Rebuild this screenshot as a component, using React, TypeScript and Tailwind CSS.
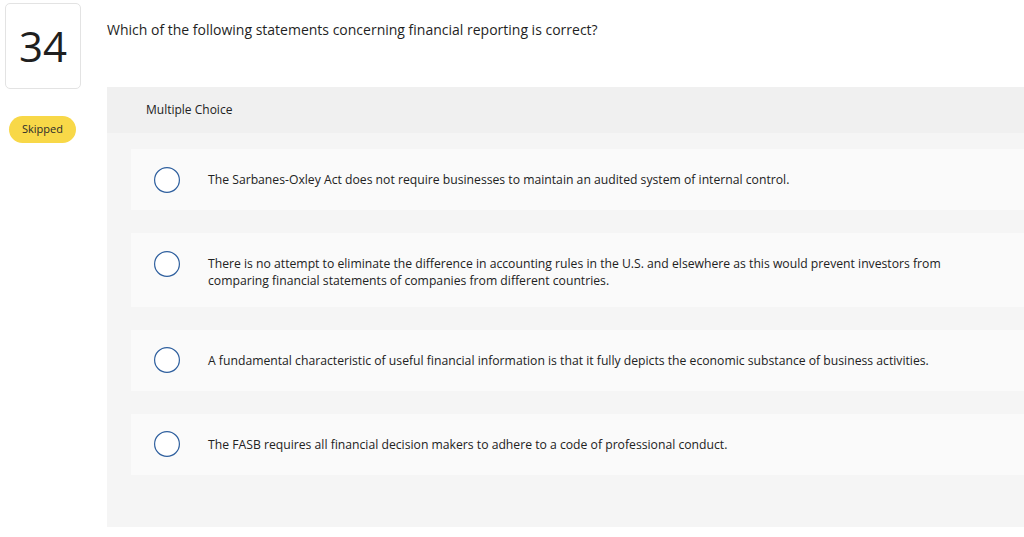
import React from 'react';

// ── Data ──────────────────────────────────────────────────────────────────────

const choices = [
  'The Sarbanes-Oxley Act does not require businesses to maintain an audited system of internal control.',
  'There is no attempt to eliminate the difference in accounting rules in the U.S. and elsewhere as this would prevent investors from comparing financial statements of companies from different countries.',
  'A fundamental characteristic of useful financial information is that it fully depicts the economic substance of business activities.',
  'The FASB requires all financial decision makers to adhere to a code of professional conduct.',
];

const font = { fontFamily: '"Open Sans", "Liberation Sans", Arial, sans-serif' };

// ── Radio ─────────────────────────────────────────────────────────────────────

function RadioCircle() {
  return (
    <svg width="28" height="28" viewBox="0 0 28 28" aria-hidden="true" className="shrink-0 -my-[1px]">
      <circle cx="14" cy="14" r="12.4" fill="#ffffff" stroke="#2e5f9e" strokeWidth="1.2" />
    </svg>
  );
}

// ── App ───────────────────────────────────────────────────────────────────────

export default function App() {
  return (
    <div className="flex w-[1024px] h-[537px] overflow-hidden bg-white text-[#222]" style={font}>

      {/* ── Left rail ─────────────────────────────────────────────── */}
      <div className="w-[107px] shrink-0 pl-[5px] pt-[3px]">
        <div className="w-[76px] h-[86px] flex items-center justify-center rounded-[5px] border border-[#e3e3e3]">
          <span className="text-[42px] font-normal leading-none text-[#1f1f1f]">34</span>
        </div>
        <div className="ml-[4px] mt-[27px] w-[67px] h-[27px] flex items-center justify-center rounded-full bg-[#f8d848]">
          <span className="text-[11px] text-[#2b2b2b]">Skipped</span>
        </div>
      </div>

      {/* ── Question ──────────────────────────────────────────────── */}
      <div className="flex-1 min-w-0">
        <p className="pt-[20px] text-[14px] leading-[20px] text-[#1f1f1f]">
          Which of the following statements concerning financial reporting is correct?
        </p>

        <div className="mt-[47px] h-[440px] bg-[#f5f5f5]">
          <div className="h-[46px] flex items-center pl-[39px] bg-[#f0f0f0]">
            <span className="text-[12px] text-[#222]">Multiple Choice</span>
          </div>

          <div className="flex flex-col gap-[23px] pl-[24px] pt-[16px]">
            {choices.map((text) => (
              <div key={text} className="flex items-start gap-[27px] pl-[22px] pr-[64px] py-[17.5px] bg-[#fafafa]">
                <RadioCircle />
                <p className="mt-[4.5px] text-[12.2px] leading-[17px] text-[#222]">{text}</p>
              </div>
            ))}
          </div>
        </div>
      </div>

    </div>
  );
}
